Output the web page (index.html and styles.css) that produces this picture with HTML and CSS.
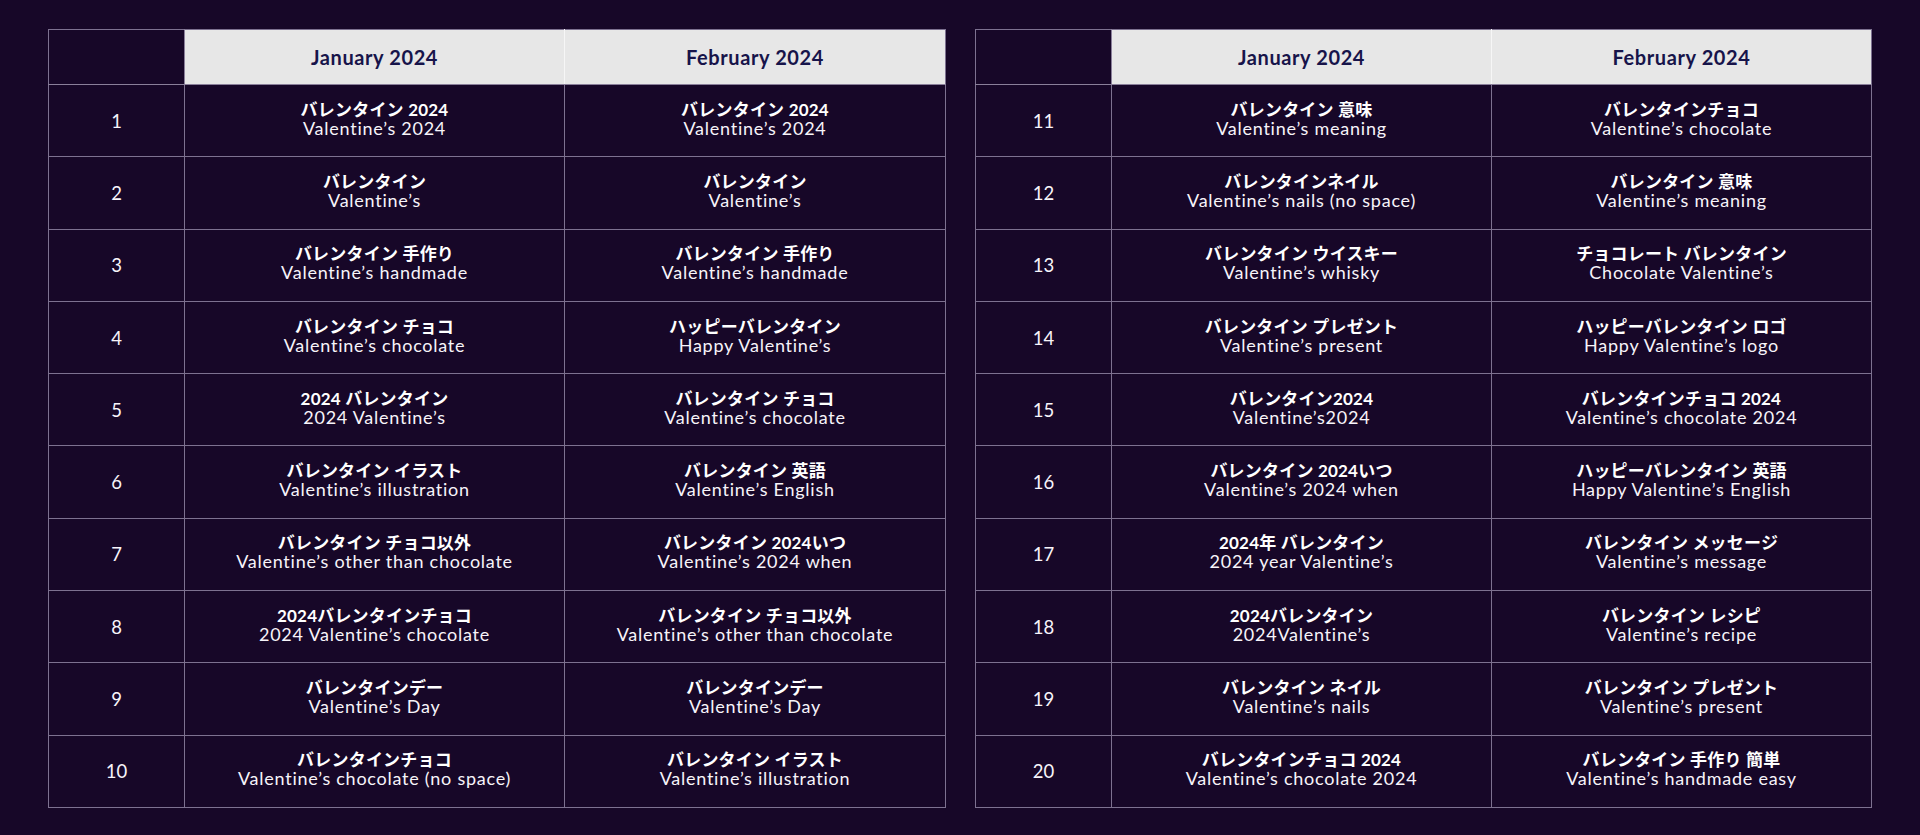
FILE: index.html
```html
<!DOCTYPE html>
<html lang="ja">
<head>
<meta charset="utf-8">
<link rel="stylesheet" href="styles.css">
</head>
<body>
<div class="page">
  <table class="kw kw-left">
    <colgroup><col class="c-num"><col class="c-jan"><col class="c-feb"></colgroup>
    <thead>
      <tr><th class="blank"></th><th>January 2024</th><th>February 2024</th></tr>
    </thead>
    <tbody>
      <tr><td class="num">1</td><td><b>バレンタイン 2024</b><span>Valentine’s 2024</span></td><td><b>バレンタイン 2024</b><span>Valentine’s 2024</span></td></tr>
      <tr><td class="num">2</td><td><b>バレンタイン</b><span>Valentine’s</span></td><td><b>バレンタイン</b><span>Valentine’s</span></td></tr>
      <tr><td class="num">3</td><td><b>バレンタイン 手作り</b><span>Valentine’s handmade</span></td><td><b>バレンタイン 手作り</b><span>Valentine’s handmade</span></td></tr>
      <tr><td class="num">4</td><td><b>バレンタイン チョコ</b><span>Valentine’s chocolate</span></td><td><b>ハッピーバレンタイン</b><span>Happy Valentine’s</span></td></tr>
      <tr><td class="num">5</td><td><b>2024 バレンタイン</b><span>2024 Valentine’s</span></td><td><b>バレンタイン チョコ</b><span>Valentine’s chocolate</span></td></tr>
      <tr><td class="num">6</td><td><b>バレンタイン イラスト</b><span>Valentine’s illustration</span></td><td><b>バレンタイン 英語</b><span>Valentine’s English</span></td></tr>
      <tr><td class="num">7</td><td><b>バレンタイン チョコ以外</b><span>Valentine’s other than chocolate</span></td><td><b>バレンタイン 2024いつ</b><span>Valentine’s 2024 when</span></td></tr>
      <tr><td class="num">8</td><td><b>2024バレンタインチョコ</b><span>2024 Valentine’s chocolate</span></td><td><b>バレンタイン チョコ以外</b><span>Valentine’s other than chocolate</span></td></tr>
      <tr><td class="num">9</td><td><b>バレンタインデー</b><span>Valentine’s Day</span></td><td><b>バレンタインデー</b><span>Valentine’s Day</span></td></tr>
      <tr><td class="num">10</td><td><b>バレンタインチョコ</b><span>Valentine’s chocolate (no space)</span></td><td><b>バレンタイン イラスト</b><span>Valentine’s illustration</span></td></tr>
    </tbody>
  </table>
  <table class="kw kw-right">
    <colgroup><col class="c-num"><col class="c-jan"><col class="c-feb"></colgroup>
    <thead>
      <tr><th class="blank"></th><th>January 2024</th><th>February 2024</th></tr>
    </thead>
    <tbody>
      <tr><td class="num">11</td><td><b>バレンタイン 意味</b><span>Valentine’s meaning</span></td><td><b>バレンタインチョコ</b><span>Valentine’s chocolate</span></td></tr>
      <tr><td class="num">12</td><td><b>バレンタインネイル</b><span>Valentine’s nails (no space)</span></td><td><b>バレンタイン 意味</b><span>Valentine’s meaning</span></td></tr>
      <tr><td class="num">13</td><td><b>バレンタイン ウイスキー</b><span>Valentine’s whisky</span></td><td><b>チョコレート バレンタイン</b><span>Chocolate Valentine’s</span></td></tr>
      <tr><td class="num">14</td><td><b>バレンタイン プレゼント</b><span>Valentine’s present</span></td><td><b>ハッピーバレンタイン ロゴ</b><span>Happy Valentine’s logo</span></td></tr>
      <tr><td class="num">15</td><td><b>バレンタイン2024</b><span>Valentine’s2024</span></td><td><b>バレンタインチョコ 2024</b><span>Valentine’s chocolate 2024</span></td></tr>
      <tr><td class="num">16</td><td><b>バレンタイン 2024いつ</b><span>Valentine’s 2024 when</span></td><td><b>ハッピーバレンタイン 英語</b><span>Happy Valentine’s English</span></td></tr>
      <tr><td class="num">17</td><td><b>2024年 バレンタイン</b><span>2024 year Valentine’s</span></td><td><b>バレンタイン メッセージ</b><span>Valentine’s message</span></td></tr>
      <tr><td class="num">18</td><td><b>2024バレンタイン</b><span>2024Valentine’s</span></td><td><b>バレンタイン レシピ</b><span>Valentine’s recipe</span></td></tr>
      <tr><td class="num">19</td><td><b>バレンタイン ネイル</b><span>Valentine’s nails</span></td><td><b>バレンタイン プレゼント</b><span>Valentine’s present</span></td></tr>
      <tr><td class="num">20</td><td><b>バレンタインチョコ 2024</b><span>Valentine’s chocolate 2024</span></td><td><b>バレンタイン 手作り 簡単</b><span>Valentine’s handmade easy</span></td></tr>
    </tbody>
  </table>
</div>
</body>
</html>
```
FILE: styles.css
```css
html, body {
  margin: 0;
  padding: 0;
  background: #170728;
}
body {
  width: 1920px;
  height: 835px;
  overflow: hidden;
  font-family: "Lato", "Noto Sans CJK JP", sans-serif;
  color: #ffffff;
}
.page {
  display: flex;
  gap: 29px;
  padding: 29px 0 0 48px;
}
.kw {
  border-collapse: collapse;
  table-layout: fixed;
  border: 1px solid #7d7190;
}
.kw-left { width: 898px; }
.kw-right { width: 897px; }
.c-num { width: 136px; }
.c-jan { width: 380px; }
.kw th {
  height: 54px;
  padding: 0;
  background: #e7e7e7;
  color: #17144a;
  font-family: "Lato", sans-serif;
  font-weight: 700;
  font-size: 20px;
  letter-spacing: 0.6px;
  border-top: 1px solid #7d7190;
  border-right: 1px solid #f6f6f6;
  border-bottom: 1px solid #8a7f9a;
}
.kw th:last-child { border-right: 1px solid #7d7190; }
.kw th.blank {
  background: #170728;
  border-right: 1px solid #8a7f9a;
}
.kw td {
  height: 71.3px;
  padding: 0;
  text-align: center;
  vertical-align: middle;
  border: 1px solid #7d7190;
}
.kw td b {
  display: block;
  font-weight: 700;
  font-size: 17px;
  line-height: 19px;
  letter-spacing: 0.2px;
}
.kw td span {
  display: block;
  font-weight: 400;
  font-size: 18px;
  line-height: 19px;
  letter-spacing: 0.75px;
  color: #f7f4fa;
  margin-bottom: 4px;
}
.kw td.num {
  font-size: 18.5px;
  font-weight: 400;
  color: #f7f4fa;
}
```
